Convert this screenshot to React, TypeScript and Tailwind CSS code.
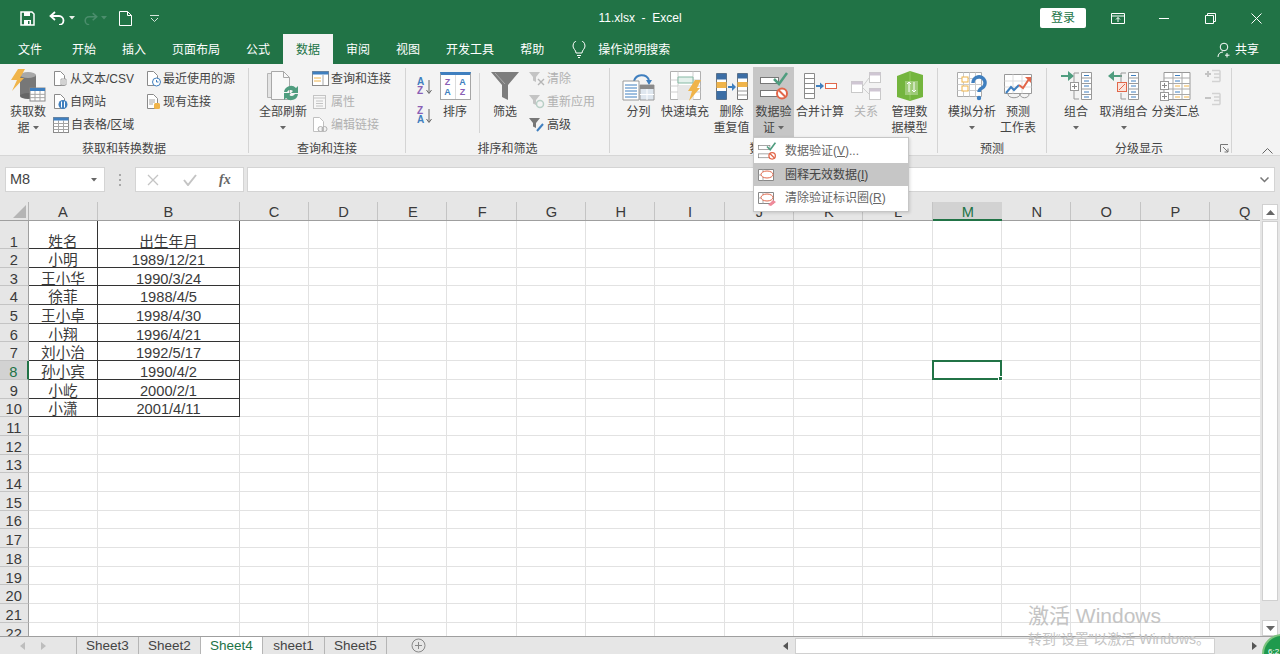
// App.tsx - Excel data tab with the data validation menu open
import type { ReactNode } from 'react';

const GRAY = '#8a8a8a';
const BLUE = '#3f7fbf';
const ORANGE = '#f0b44a';
const TEAL = '#4f9d7f';
const RED = '#e2674a';

const columns = ['A', 'B', 'C', 'D', 'E', 'F', 'G', 'H', 'I', 'J', 'K', 'L', 'M', 'N', 'O', 'P', 'Q'];

const people: [string, string][] = [
  ['姓名', '出生年月'],
  ['小明', '1989/12/21'],
  ['王小华', '1990/3/24'],
  ['徐菲', '1988/4/5'],
  ['王小卓', '1998/4/30'],
  ['小翔', '1996/4/21'],
  ['刘小治', '1992/5/17'],
  ['孙小宾', '1990/4/2'],
  ['小屹', '2000/2/1'],
  ['小潇', '2001/4/11'],
];

const tabs = ['开始', '插入', '页面布局', '公式', '数据', '审阅', '视图', '开发工具', '帮助'];
const sheets = ['Sheet3', 'Sheet2', 'Sheet4', 'sheet1', 'Sheet5'];

function Svg({ w, h, children }: { w: number; h: number; children: ReactNode }) {
  return (
    <svg width={w} height={h} viewBox={`0 0 ${w} ${h}`} fill="none" className="shrink-0">
      {children}
    </svg>
  );
}

function Caret({ color = '#666' }: { color?: string }) {
  return (
    <svg width="6" height="4" viewBox="0 0 6 4" className="shrink-0">
      <path d="M0 0h6L3 3.5z" fill={color} />
    </svg>
  );
}

function MiniTable({ x, y, w, h, head = BLUE, rows = 3, cols = 3 }: { x: number; y: number; w: number; h: number; head?: string; rows?: number; cols?: number }) {
  const lines = [];
  for (let i = 1; i < rows; i++) lines.push(<path key={`r${i}`} d={`M${x} ${y + 3 + ((h - 3) * i) / rows}h${w}`} stroke="#a5a5a5" />);
  for (let i = 1; i < cols; i++) lines.push(<path key={`c${i}`} d={`M${x + (w * i) / cols} ${y + 3}v${h - 3}`} stroke="#a5a5a5" />);
  return (
    <g>
      <rect x={x} y={y} width={w} height={h} fill="#fff" stroke="#8a8a8a" />
      {lines}
      <rect x={x} y={y} width={w} height="3" fill={head} />
    </g>
  );
}

function Doc({ x = 2, y = 1, w = 10, h = 14, stroke = GRAY }: { x?: number; y?: number; w?: number; h?: number; stroke?: string }) {
  return <path d={`M${x + 0.5} ${y + 0.5}h${w - 4}l4 4v${h - 4}h-${w}z`} fill="#fff" stroke={stroke} />;
}

function GetDataIcon() {
  return (
    <Svg w={36} h={34}>
      <path d="M10 6h16v21H10z" fill="#777" />
      <ellipse cx="18" cy="6" rx="8" ry="3" fill="#a8a8a8" />
      <ellipse cx="18" cy="27" rx="8" ry="3" fill="#666" />
      <path d="M8 0h7l-5 9h4L2 22l5-11H1z" fill={ORANGE} />
      <MiniTable x={20} y={19} w={15} h={13} />
    </Svg>
  );
}

function TextFileIcon() {
  return (
    <Svg w={15} h={17}>
      <Doc x={1} y={1} w={10} h={14} />
      <path d="M8 9h5v6H8z" fill="#fff" stroke="#a5a5a5" />
      <path d="M9 11h3M9 13h3" stroke="#a5a5a5" />
    </Svg>
  );
}

function WebIcon() {
  return (
    <Svg w={15} h={17}>
      <Doc x={1} y={1} w={10} h={14} />
      <circle cx="10" cy="11.5" r="4.5" fill={BLUE} />
      <path d="M8.5 8.5v6M11.5 8.5v6" stroke="#fff" />
    </Svg>
  );
}

function TableIcon() {
  return (
    <Svg w={16} h={17}>
      <MiniTable x={0.5} y={1.5} w={15} h={15} rows={4} cols={3} />
    </Svg>
  );
}

function RecentIcon() {
  return (
    <Svg w={15} h={17}>
      <Doc x={1} y={1} w={10} h={14} />
      <circle cx="10.5" cy="12" r="4" fill="#fff" stroke={BLUE} />
      <path d="M10.5 10v2h2" stroke={BLUE} />
    </Svg>
  );
}

function ExistingIcon() {
  return (
    <Svg w={15} h={17}>
      <Doc x={1} y={1} w={10} h={14} />
      <path d="M3 7h6M3 9h6M3 11h4" stroke="#a5a5a5" />
      <rect x="8" y="10" width="6" height="6" rx="1.5" fill={ORANGE} />
    </Svg>
  );
}

function RefreshIcon() {
  return (
    <Svg w={34} h={32}>
      <path d="M1.5 3.5h14v24h-14z" fill="#e4e4e4" stroke="#b5b5b5" />
      <path d="M5.5 1.5h12l6 6v22h-18z" fill="#f8f8f8" stroke="#a8a8a8" />
      <path d="M17.5 1.5v6h6" stroke="#a8a8a8" />
      <path d="M18 22a7 7 0 0 1 12-4l2-2v7h-7l2-2a4 4 0 0 0-6 1z" fill={TEAL} />
      <path d="M32 24a7 7 0 0 1-12 4l-2 2v-7h7l-2 2a4 4 0 0 0 6-1z" fill={TEAL} />
    </Svg>
  );
}

function QueriesIcon() {
  return (
    <Svg w={17} h={15}>
      <rect x="0.5" y="0.5" width="16" height="14" fill="#fff" stroke="#8a8a8a" />
      <rect x="0.5" y="0.5" width="16" height="3" fill={BLUE} />
      <path d="M11 4v10" stroke="#a5a5a5" />
      <path d="M2 7h7M2 10h7" stroke={ORANGE} />
    </Svg>
  );
}

function PropsIcon() {
  return (
    <Svg w={15} h={16}>
      <rect x="1.5" y="1.5" width="12" height="13" fill="#f7f7f7" stroke="#c4c4c4" />
      <path d="M1.5 4h12M4 7h7M4 9.5h7M4 12h7" stroke="#c4c4c4" />
    </Svg>
  );
}

function LinksIcon() {
  return (
    <Svg w={16} h={17}>
      <Doc x={1} y={1} w={10} h={14} stroke="#c0c0c0" />
      <circle cx="8.5" cy="13" r="2.5" fill="#f3f3f3" stroke="#b0b0b0" />
      <circle cx="12.5" cy="13" r="2.5" fill="none" stroke="#b0b0b0" />
    </Svg>
  );
}

function SortGlyph({ top, bottom }: { top: string; bottom: string }) {
  const color = (l: string) => (l === 'A' ? 'text-[#3f7fbf]' : 'text-[#8a5fb5]');
  return (
    <div className="relative flex h-[17px] w-[15px] flex-col text-[10px] font-bold leading-[8.500px]">
      <span className={color(top)}>{top}</span>
      <span className={color(bottom)}>{bottom}</span>
      <svg width="6" height="14" viewBox="0 0 6 14" className="absolute top-[2px] right-0">
        <path d="M3 0v13M0.500 10L3 13.500 5.500 10" stroke="#666" fill="none" />
      </svg>
    </div>
  );
}

function SortIcon() {
  return (
    <div className="relative h-[28px] w-[31px] border border-[#a5a5a5] border-t-[3px] border-t-[#3f7fbf] bg-white">
      <div className="grid h-full grid-cols-2 gap-x-px bg-[#dcdcdc] text-center text-[9px] font-bold leading-[10px]">
        <div className="flex flex-col bg-white pt-[2px]">
          <span className="text-[#8a5fb5]">Z</span>
          <span className="text-[#3f7fbf]">A</span>
        </div>
        <div className="flex flex-col bg-white pt-[2px]">
          <span className="text-[#3f7fbf]">A</span>
          <span className="text-[#8a5fb5]">Z</span>
        </div>
      </div>
    </div>
  );
}

function FunnelIcon() {
  return (
    <Svg w={30} h={30}>
      <path d="M1 1h28L18 14v15l-6-3V14z" fill="#7d7d7d" />
      <path d="M5 2l10 11" stroke="#aaa" />
    </Svg>
  );
}

function ClearIcon() {
  return (
    <Svg w={16} h={15}>
      <path d="M0 1h11L7 6v5L4 9.500V6z" fill="#c4c4c4" />
      <path d="M9 8l6 6M15 8l-6 6" stroke="#b5b5b5" strokeWidth="1.400" />
    </Svg>
  );
}

function ReapplyIcon() {
  return (
    <Svg w={16} h={15}>
      <path d="M0 1h11L7 6v5L4 9.500V6z" fill="#c4c4c4" />
      <circle cx="11" cy="10" r="3.500" stroke="#b8cfc6" strokeWidth="1.500" />
    </Svg>
  );
}

function AdvancedIcon() {
  return (
    <Svg w={16} h={16}>
      <path d="M0 1h11L7 6v5L4 9.500V6z" fill="#777" />
      <path d="M8 14l6-7" stroke={BLUE} strokeWidth="2" />
    </Svg>
  );
}

function SplitIcon() {
  return (
    <Svg w={33} h={29}>
      <path d="M12 9a8 8 0 0 1 15-1" stroke={BLUE} strokeWidth="2" />
      <path d="M24 8h6l-3 5z" fill={BLUE} />
      <path d="M1 9h16v19H1z" fill="#fff" stroke="#999" />
      <path d="M3 13h12M3 16h12M3 19h12M3 22h12M3 25h12" stroke={BLUE} />
      <path d="M18 13h14v15H18z" fill="#dfe7ef" stroke="#999" />
      <path d="M18 13h14v4H18z" fill="#8a8a8a" />
      <path d="M25 17v11M18 22.500h14" stroke="#fff" />
    </Svg>
  );
}

function FlashIcon() {
  return (
    <Svg w={31} h={30}>
      <path d="M0.500 0.500h30v28h-30z" fill="#fff" stroke="#b0b0b0" />
      <path d="M0.500 9h30M0.500 15h30M0.500 21h30M8 0.500v28M23 0.500v28" stroke="#cfcfcf" />
      <path d="M8 15h15v14H8z" fill="#e7e7e7" />
      <path d="M8 6h15v6H8z" fill="#e4f1ec" stroke="#86b9a4" />
      <path d="M25 9h6l-4 8h3L19 30l3-10h-4z" fill={ORANGE} />
    </Svg>
  );
}

function DedupeIcon() {
  return (
    <Svg w={32} h={27}>
      <path d="M0.500 0.500h10v26h-10z" fill="#fff" stroke="#777" />
      <path d="M0.500 0.500h10v6h-10z M0.500 18h10v8.500h-10z" fill="#3c6ea5" />
      <path d="M0.500 9h10v6h-10z" fill={ORANGE} />
      <path d="M12 14h6" stroke={BLUE} strokeWidth="2" />
      <path d="M16 10l4 4-4 4z" fill={BLUE} />
      <path d="M21.500 0.500h10v26h-10z" fill="#fff" stroke="#777" />
      <path d="M21.500 0.500h10v5h-10z" fill="#3c6ea5" />
      <path d="M21.500 9h10v5h-10z" fill={ORANGE} />
      <path d="M21.500 18h10M21.500 22h10" stroke="#999" />
    </Svg>
  );
}

function ValidateIcon({ size = 28 }: { size?: number }) {
  return (
    <svg width={size} height={size} viewBox="0 0 28 28" fill="none" className="shrink-0">
      <rect x="0.500" y="5.500" width="18" height="6" fill="#fff" stroke="#777" />
      <rect x="0.500" y="18.500" width="18" height="6" fill="#fff" stroke="#777" />
      <path d="M14 7l5 5 8-11" stroke={TEAL} strokeWidth="2.500" />
      <circle cx="22" cy="21.500" r="5" fill="#fff" stroke={RED} strokeWidth="2" />
      <path d="M18.500 18l7 7" stroke={RED} strokeWidth="2" />
    </svg>
  );
}

function ConsolidateIcon() {
  return (
    <Svg w={33} h={26}>
      <path d="M0.500 0.500h10v25h-10z" fill="#fff" stroke="#8a8a8a" />
      <path d="M0.500 5.500h10M0.500 10.500h10M0.500 15.500h10M0.500 20.500h10" stroke="#8a8a8a" />
      <path d="M12 13h6" stroke={BLUE} strokeWidth="2" />
      <path d="M16 9.500l4 3.500-4 3.500z" fill={BLUE} />
      <rect x="21.500" y="10.500" width="11" height="5" fill="#fff" stroke={RED} />
    </Svg>
  );
}

function RelationIcon() {
  return (
    <Svg w={30} h={28}>
      <rect x="0.500" y="9.500" width="11" height="11" fill="#fff" stroke="#c9c9c9" />
      <rect x="0.500" y="9.500" width="11" height="3" fill="#cfc6d3" />
      <rect x="18.500" y="0.500" width="11" height="10" fill="#fff" stroke="#c9c9c9" />
      <rect x="18.500" y="0.500" width="11" height="3" fill="#cfc6d3" />
      <rect x="18.500" y="16.500" width="11" height="11" fill="#fff" stroke="#c9c9c9" />
      <rect x="18.500" y="16.500" width="11" height="3" fill="#cfc6d3" />
      <path d="M12 14l6-8M12 16l6 6" stroke="#cfcfcf" />
    </Svg>
  );
}

function ModelIcon() {
  return (
    <Svg w={29} h={30}>
      <path d="M2 5l13-5 13 4v22l-13 4-13-4z" fill="#74b53e" />
      <path d="M15 0v30" stroke="#8fca5c" />
      <rect x="10" y="10" width="13" height="14" fill="#fff" opacity="0.300" />
      <path d="M14 11v10M12 13l2-2 2 2M19 21V11M17 19l2 2 2-2" stroke="#fff" />
    </Svg>
  );
}

function WhatIfIcon() {
  return (
    <Svg w={30} h={29}>
      <path d="M0.500 0.500h24v24h-24z" fill="#fff" stroke="#aaa" />
      <path d="M0.500 6.500h24M0.500 12.500h24M0.500 18.500h24M6.500 0.500v24M12.500 0.500v24M18.500 0.500v24" stroke="#ccc" />
      <rect x="5" y="5" width="6" height="5" fill="#fff" stroke={ORANGE} />
      <rect x="5" y="14" width="6" height="5" fill="#fff" stroke={ORANGE} />
      <path d="M16 11a6 6 0 1 1 9 5c-2 1-3 2-3 4" stroke={BLUE} strokeWidth="3.500" />
      <circle cx="22" cy="26" r="2.200" fill={BLUE} />
    </Svg>
  );
}

function ForecastIcon() {
  return (
    <Svg w={29} h={25}>
      <path d="M0.500 0.500h27v19h-27z" fill="#fff" stroke="#999" />
      <path d="M0.500 7h27M0.500 13h27M9 0.500v19M18 0.500v19" stroke="#ddd" />
      <path d="M2 19l5-6 3 3 5-5" stroke={BLUE} strokeWidth="2" />
      <path d="M15 11l4 3 6-9" stroke={RED} strokeWidth="2" />
      <path d="M21 3h6v6z" fill={RED} />
      <path d="M4 20c0 5 12 5 12 0M16 20c0 5 9 5 9 0" stroke="#999" />
    </Svg>
  );
}

function OutlineRows({ x }: { x: number }) {
  return (
    <g>
      <path d={`M${x}.500 1.500h10v27h-10z`} fill="#fff" stroke="#999" />
      <path d={`M${x}.500 7h10M${x}.500 12.500h10M${x}.500 18h10M${x}.500 23.500h10`} stroke="#999" />
      <path d={`M${x + 3} 4.500h5M${x + 3} 10h5M${x + 3} 15h5M${x + 3} 21h5M${x + 3} 26h5`} stroke={BLUE} />
    </g>
  );
}

function GroupIcon() {
  return (
    <Svg w={31} h={30}>
      <path d="M0 5h9" stroke={TEAL} strokeWidth="2" />
      <path d="M7 0l6 5-6 5z" fill={TEAL} />
      <path d="M13 2h5M13 28h5M13 2v9M13 19v9" stroke="#999" />
      <rect x="9.500" y="11.500" width="8" height="8" fill="#fff" stroke="#999" />
      <path d="M11 15.500h5M13.500 13v5" stroke="#888" />
      <OutlineRows x={20} />
    </Svg>
  );
}

function UngroupIcon() {
  return (
    <Svg w={31} h={30}>
      <path d="M5 5h9" stroke={TEAL} strokeWidth="2" />
      <path d="M6 0L0 5l6 5z" fill={TEAL} />
      <path d="M13 2h5M13 28h5M13 2v9M13 22v6" stroke="#999" />
      <rect x="9.500" y="11.500" width="9" height="9" fill="#fbe4dc" stroke={RED} />
      <path d="M11 19l6-6" stroke={RED} />
      <OutlineRows x={20} />
    </Svg>
  );
}

function SubtotalIcon() {
  return (
    <Svg w={31} h={30}>
      <path d="M4 1.500h26v27H4z" fill="#fff" stroke="#999" />
      <path d="M13 1.500v27M22 1.500v27M4 7h26M4 12.500h26M4 18h26M4 23.500h26" stroke="#aaa" />
      <path d="M15 4.500h5M15 10h5M15 21h5" stroke={BLUE} />
      <path d="M15 15h5M24 15h5M15 26h5M24 26h5" stroke={ORANGE} />
      <rect x="0.500" y="10.500" width="8" height="8" fill="#fff" stroke="#999" />
      <rect x="0.500" y="21.500" width="8" height="8" fill="#fff" stroke="#999" />
      <path d="M2 14.500h5M4.500 12v5M2 25.500h5M4.500 23v5" stroke="#888" />
    </Svg>
  );
}

function ShowDetailIcon({ minus }: { minus?: boolean }) {
  return (
    <Svg w={16} h={15}>
      <path d="M7 1.500h8M9 5h6M9 8.500h6M7 12.500h8M15 1.500v11" stroke="#d2d2d2" strokeWidth="1.500" />
      <path d={minus ? 'M0 6h6' : 'M0 5h6M3 2v6'} stroke="#c4c4c4" strokeWidth="2" />
    </Svg>
  );
}

function CircleMenuIcon({ eraser }: { eraser?: boolean }) {
  return (
    <Svg w={18} h={16}>
      <path d="M0.500 2.500h15v11h-15z" fill="#fff" stroke="#888" />
      <path d="M0.500 8h15M5 2.500v11" stroke="#aaa" />
      <ellipse cx="9" cy="7.500" rx="6" ry="3.500" fill="#fff" stroke={RED} />
      {eraser && <path d="M10 15l5-5 3 2-5 4z" fill="#ef8a9a" />}
    </Svg>
  );
}

function LargeButton({ icon, lines, caret, dim, active, width }: { icon: ReactNode; lines: string[]; caret?: boolean; dim?: boolean; active?: boolean; width: string }) {
  return (
    <div className={`flex h-[70px] shrink-0 flex-col items-center ${width} ${active ? 'bg-[#c6c6c6]' : ''}`}>
      <div className="flex h-[37px] items-center justify-center pt-[1px]">{icon}</div>
      {lines.map((line, i) => (
        <div key={i} className={`flex h-[16px] items-center gap-[3px] whitespace-nowrap leading-[16px] ${dim ? 'text-[#b1b1b1]' : 'text-[#444]'}`}>
          {line}
          {caret && lines.length > 1 && i === lines.length - 1 && <Caret />}
        </div>
      ))}
      {caret && lines.length === 1 && (
        <div className="flex h-[16px] items-center">
          <Caret />
        </div>
      )}
    </div>
  );
}

function SmallButton({ icon, label, dim, gap = 'gap-[2px]' }: { icon: ReactNode; label: string; dim?: boolean; gap?: string }) {
  return (
    <div className={`flex h-[23px] items-center whitespace-nowrap ${gap} ${dim ? 'text-[#b1b1b1]' : 'text-[#444]'}`}>
      {icon}
      {label}
    </div>
  );
}

function Group({ label, width, children }: { label: string; width: string; children: ReactNode }) {
  return (
    <div className={`flex shrink-0 flex-col ${width}`}>
      <div className="flex h-[70px]">{children}</div>
      <div className="mt-[3px] flex h-[19px] items-center justify-center leading-[19px] text-[#444]">{label}</div>
    </div>
  );
}

function Sep() {
  return <div className="my-[1px] h-[85px] w-px shrink-0 bg-[#d4d4d4]" />;
}

function TitleBar() {
  return (
    <div className="flex h-[36px] shrink-0 items-center bg-[#217346] text-white">
      <div className="ml-[20px] flex w-[150px] items-center">
        <svg width="15" height="15" viewBox="0 0 15 15">
          <path d="M1 1h11l2 2v11H1z" fill="none" stroke="#fff" strokeWidth="1.500" />
          <path d="M4 1h6v4H4zM4 9h7v5H4z" fill="#fff" />
          <path d="M8 10h1.500v3H8z" fill="#217346" />
        </svg>
        <svg width="17" height="14" viewBox="0 0 17 14" fill="none" className="ml-[14px]">
          <path d="M6 1L1.500 5 6 9M2 5h8a4.500 4.500 0 0 1 0 9" stroke="#fff" strokeWidth="1.800" />
        </svg>
        <div className="ml-[3px]">
          <Caret color="#e8efe9" />
        </div>
        <svg width="15" height="13" viewBox="0 0 17 14" fill="none" className="ml-[8px]">
          <path d="M11 1l4.500 4L11 9M15 5H7a4.500 4.500 0 0 0 0 9" stroke="#4b8d6c" strokeWidth="1.800" />
        </svg>
        <div className="ml-[3px]">
          <Caret color="#4b8d6c" />
        </div>
        <svg width="13" height="15" viewBox="0 0 13 15" fill="none" className="ml-[12px]">
          <path d="M0.500 0.500h8l4 4v10h-12zM8.500 0.500v4h4" stroke="#fff" />
        </svg>
        <svg width="9" height="7" viewBox="0 0 9 7" fill="none" className="ml-[18px]">
          <path d="M0 0.500h9M1 3l3.500 3.500L8 3" stroke="#d5e4da" />
        </svg>
      </div>
      <div className="flex-1 pl-[70px] text-center text-[12px]">11.xlsx&nbsp; -&nbsp; Excel</div>
      <div className="flex h-[20px] w-[46px] items-center justify-center rounded-[2px] bg-white text-[12px] text-[#217346]">登录</div>
      <svg width="14" height="11" viewBox="0 0 14 11" fill="none" className="ml-[25px]">
        <path d="M0.500 0.500h13v10h-13zM0.500 3h13M7 9V4.500M5 6.500l2-2 2 2" stroke="#fff" />
      </svg>
      <svg width="10" height="1" viewBox="0 0 10 1" className="ml-[34px]">
        <path d="M0 0.500h10" stroke="#fff" />
      </svg>
      <svg width="11" height="11" viewBox="0 0 11 11" fill="none" className="ml-[36px]">
        <path d="M0.500 2.500h8v8h-8zM2.500 2.500v-2h8v8h-2" stroke="#fff" />
      </svg>
      <svg width="11" height="11" viewBox="0 0 11 11" fill="none" className="mr-[18px] ml-[35px]">
        <path d="M0.500 0.500l10 10M10.500 0.500l-10 10" stroke="#fff" />
      </svg>
    </div>
  );
}

function TabRow() {
  return (
    <div className="flex h-[28px] shrink-0 items-end bg-[#217346] text-[12px] text-white">
      <div className="ml-[5px] flex h-[30px] w-[50px] items-center justify-center pt-[1px]">文件</div>
      {tabs.map((tab, i) => (
        <div
          key={tab}
          className={`flex h-[30px] items-center px-[13px] pt-[1px] ${i === 0 ? 'ml-[4px]' : ''} ${tab === '数据' ? 'bg-[#f3f3f3] text-[#217346]' : ''}`}
        >
          {tab}
        </div>
      ))}
      <div className="ml-[15px] flex h-[30px] items-center gap-[12px] pt-[1px]">
        <svg width="14" height="17" viewBox="0 0 14 17" fill="none">
          <path d="M4 12c0-3-3-4-3-7a6 6 0 0 1 12 0c0 3-3 4-3 7zM5 14.500h4M6 16.500h2" stroke="#fff" />
        </svg>
        操作说明搜索
      </div>
      <div className="mr-[21px] ml-auto flex h-[30px] items-center gap-[3px] pt-[1px]">
        <svg width="15" height="16" viewBox="0 0 15 16" fill="none">
          <circle cx="7" cy="5" r="3.800" stroke="#fff" />
          <path d="M1 15c0-3 2-5 5-5M10 11v4.500M8 13.200h4.500" stroke="#fff" />
        </svg>
        共享
      </div>
    </div>
  );
}

function Ribbon() {
  return (
    <div className="flex h-[92px] shrink-0 border-b border-[#d6d6d6] bg-[#f3f3f3] pt-[3px] text-[12px]">
      <Group label="获取和转换数据" width="w-[248px]">
        <div className="ml-[3px]">
          <LargeButton icon={<GetDataIcon />} lines={['获取数', '据']} caret width="w-[50px]" />
        </div>
        <div className="w-[93px]">
          <SmallButton icon={<TextFileIcon />} label="从文本/CSV" />
          <SmallButton icon={<WebIcon />} label="自网站" />
          <SmallButton icon={<TableIcon />} label="自表格/区域" />
        </div>
        <div>
          <SmallButton icon={<RecentIcon />} label="最近使用的源" />
          <SmallButton icon={<ExistingIcon />} label="现有连接" />
        </div>
      </Group>
      <Sep />
      <Group label="查询和连接" width="w-[156px]">
        <div className="ml-[5px]">
          <LargeButton icon={<RefreshIcon />} lines={['全部刷新']} caret width="w-[58px]" />
        </div>
        <div>
          <SmallButton icon={<QueriesIcon />} label="查询和连接" />
          <SmallButton icon={<PropsIcon />} label="属性" dim gap="gap-[4px]" />
          <SmallButton icon={<LinksIcon />} label="编辑链接" dim gap="gap-[3px]" />
        </div>
      </Group>
      <Sep />
      <Group label="排序和筛选" width="w-[203px]">
        <div className="ml-[11px] flex h-[70px] w-[22px] flex-col gap-[12px] pt-[11px]">
          <SortGlyph top="A" bottom="Z" />
          <SortGlyph top="Z" bottom="A" />
        </div>
        <LargeButton icon={<SortIcon />} lines={['排序']} width="w-[32px]" />
        <div className="mx-[8px] mt-[6px] h-[60px] w-px bg-[#d4d4d4]" />
        <LargeButton icon={<FunnelIcon />} lines={['筛选']} width="w-[34px]" />
        <div className="pl-[7px]">
          <SmallButton icon={<ClearIcon />} label="清除" dim />
          <SmallButton icon={<ReapplyIcon />} label="重新应用" dim />
          <SmallButton icon={<AdvancedIcon />} label="高级" />
        </div>
      </Group>
      <Sep />
      <Group label="数据工具" width="w-[327px]">
        <div className="ml-[7px] flex">
          <LargeButton icon={<SplitIcon />} lines={['分列']} width="w-[43px]" />
          <LargeButton icon={<FlashIcon />} lines={['快速填充']} width="w-[50px]" />
          <LargeButton icon={<DedupeIcon />} lines={['删除', '重复值']} width="w-[43px]" />
          <LargeButton icon={<ValidateIcon />} lines={['数据验', '证']} caret active width="w-[41px]" />
          <LargeButton icon={<ConsolidateIcon />} lines={['合并计算']} width="w-[52px]" />
          <LargeButton icon={<RelationIcon />} lines={['关系']} dim width="w-[40px]" />
          <LargeButton icon={<ModelIcon />} lines={['管理数', '据模型']} width="w-[47px]" />
        </div>
      </Group>
      <Sep />
      <Group label="预测" width="w-[108px]">
        <div className="ml-[8px] flex">
          <LargeButton icon={<WhatIfIcon />} lines={['模拟分析']} caret width="w-[52px]" />
          <LargeButton icon={<ForecastIcon />} lines={['预测', '工作表']} width="w-[40px]" />
        </div>
      </Group>
      <Sep />
      <Group label="分级显示" width="w-[184px]">
        <div className="ml-[9px] flex">
          <LargeButton icon={<GroupIcon />} lines={['组合']} caret width="w-[40px]" />
          <LargeButton icon={<UngroupIcon />} lines={['取消组合']} caret width="w-[55px]" />
          <LargeButton icon={<SubtotalIcon />} lines={['分类汇总']} width="w-[49px]" />
          <div className="ml-[5px] flex flex-col gap-[8px] pt-[2px]">
            <ShowDetailIcon />
            <ShowDetailIcon minus />
          </div>
        </div>
      </Group>
      <Sep />
    </div>
  );
}

function FormulaBar() {
  return (
    <div className="flex h-[46px] shrink-0 items-start bg-[#e6e6e6] pt-[11px] text-[14.500px] text-[#444]">
      <div className="ml-[5px] flex h-[25px] w-[100px] items-center justify-between border border-[#d4d4d4] bg-white pr-[7px] pl-[4px]">
        M8
        <Caret />
      </div>
      <div className="mx-[14px] flex h-[25px] w-[2px] flex-col justify-center gap-[3px]">
        <div className="h-[2px] w-[2px] bg-[#a8a8a8]" />
        <div className="h-[2px] w-[2px] bg-[#a8a8a8]" />
        <div className="h-[2px] w-[2px] bg-[#a8a8a8]" />
      </div>
      <div className="flex h-[25px] w-[109px] items-center border border-[#d4d4d4] bg-white">
        <svg width="12" height="12" viewBox="0 0 12 12" fill="none" className="ml-[11px]">
          <path d="M1 1l10 10M11 1L1 11" stroke="#c4c4c4" strokeWidth="1.300" />
        </svg>
        <svg width="14" height="12" viewBox="0 0 14 12" fill="none" className="ml-[24px]">
          <path d="M1 6l4 5 8-10" stroke="#c4c4c4" strokeWidth="2" />
        </svg>
        <span className="ml-[22px] font-['Liberation_Serif',serif] text-[14px] font-bold italic text-[#666]">fx</span>
      </div>
      <div className="ml-[3px] flex h-[25px] flex-1 items-center justify-end border border-[#d4d4d4] bg-white pr-[5px]">
        <svg width="9" height="6" viewBox="0 0 9 6" fill="none">
          <path d="M0.500 0.500L4.500 4.500 8.500 0.500" stroke="#777" strokeWidth="1.500" />
        </svg>
      </div>
      <div className="w-[5px]" />
    </div>
  );
}

function HeaderRow() {
  return (
    <div className="grid h-[18.500px] shrink-0 grid-cols-[28.500px_69px_142px_repeat(15,69.330px)] grid-rows-[minmax(0,1fr)] border-b border-[#9f9f9f] bg-[#e6e6e6] leading-[20px]">
      <div className="flex items-end justify-end border-r border-[#b5b5b5] pr-[2px] pb-[2px]">
        <svg width="13" height="13" viewBox="0 0 13 13">
          <path d="M13 0v13H0z" fill="#b5b5b5" />
        </svg>
      </div>
      {columns.map((c) => (
        <div
          key={c}
          className={`pl-[1px] text-center ${c === 'M' ? 'h-[19px] border-b-2 border-[#217346] bg-[#d2d2d2] text-[#217346]' : 'border-r border-[#c4c4c4]'}`}
        >
          {c}
        </div>
      ))}
    </div>
  );
}

function SheetRow({ index }: { index: number }) {
  const person = people[index];
  const boxed = index < people.length;
  const selectedRow = index === 7;
  const rowAlign = index === 0 ? 'items-end' : 'items-center';
  const height = index === 0 ? 'h-[28.500px]' : 'h-[18.700px]';
  const nudge = index === 0 ? 'translate-y-[3px]' : 'translate-y-[2px]';
  return (
    <div className={`grid shrink-0 grid-cols-[28.500px_69px_142px_repeat(15,69.330px)] grid-rows-[minmax(0,1fr)] leading-[18px] ${height}`}>
      <div
        className={`flex justify-center ${rowAlign} border-b border-[#c4c4c4] ${selectedRow ? 'border-r-2 border-r-[#217346] bg-[#d2d2d2] text-[#217346]' : 'border-r border-r-[#9f9f9f] bg-[#e6e6e6]'}`}
      >
        <span className={nudge}>{index + 1}</span>
      </div>
      {columns.map((c, i) => {
        const text = person && i < 2 ? person[i] : '';
        const dark = boxed && i < 2;
        return (
          <div
            key={c}
            className={`relative flex justify-center whitespace-nowrap border-r border-b pl-[1px] ${rowAlign} ${dark ? 'border-[#333]' : 'border-[#e2e2e2]'}`}
          >
            {text && <span className={nudge}>{text}</span>}
            {selectedRow && c === 'M' && (
              <div className="absolute -top-px -left-px z-10 h-[20px] w-[70px] border-2 border-[#217346]">
                <div className="absolute -right-[3px] -bottom-[3px] h-[5px] w-[5px] border border-white bg-[#217346]" />
              </div>
            )}
          </div>
        );
      })}
    </div>
  );
}

function ScrollButton({ direction }: { direction: 'up' | 'down' }) {
  return (
    <div className="flex h-[16px] w-[16px] items-center justify-center border border-[#d0d0d0] bg-white">
      <svg width="9" height="5" viewBox="0 0 9 5">
        <path d={direction === 'up' ? 'M0 5h9L4.500 0z' : 'M0 0h9L4.500 5z'} fill="#666" />
      </svg>
    </div>
  );
}

function SheetArea() {
  const rows = Array.from({ length: 22 }, (_, i) => i);
  return (
    <div className="flex min-h-0 flex-1">
      <div className="flex w-[1260px] shrink-0 flex-col overflow-hidden text-[14.670px] text-[#3a3a3a]">
        <HeaderRow />
        {rows.map((i) => (
          <SheetRow key={i} index={i} />
        ))}
      </div>
      <div className="flex flex-1 flex-col items-center bg-[#e6e6e6] pt-[2px]">
        <ScrollButton direction="up" />
        <div className="mt-[1px] h-[380px] w-[16px] border border-[#d0d0d0] bg-white" />
        <div className="mt-auto">
          <ScrollButton direction="down" />
        </div>
      </div>
    </div>
  );
}

function SheetTabs() {
  return (
    <div className="flex h-[18px] shrink-0 items-center border-t border-[#9f9f9f] bg-[#e6e6e6] text-[13.500px] leading-[17px] text-[#444]">
      <div className="flex w-[77px] items-center gap-[16px] pl-[20px]">
        <svg width="5" height="8" viewBox="0 0 5 8">
          <path d="M5 0v8L0 4z" fill="#bdbdbd" />
        </svg>
        <svg width="5" height="8" viewBox="0 0 5 8">
          <path d="M0 0v8l5-4z" fill="#bdbdbd" />
        </svg>
      </div>
      {sheets.map((s) => (
        <div
          key={s}
          className={`h-[18px] w-[63px] border-r border-l border-[#b5b5b5] text-center -ml-px first:ml-0 ${s === 'Sheet4' ? 'bg-white text-[#217346]' : ''}`}
        >
          {s}
        </div>
      ))}
      <svg width="15" height="15" viewBox="0 0 15 15" fill="none" className="ml-[24px]">
        <circle cx="7.500" cy="7.500" r="6.500" stroke="#888" />
        <path d="M4 7.500h7M7.500 4v7" stroke="#888" />
      </svg>
      <div className="ml-auto flex h-[17px] w-[500px] items-center">
        <svg width="5" height="8" viewBox="0 0 5 8" className="mr-[7px] ml-[3px]">
          <path d="M5 0v8L0 4z" fill="#555" />
        </svg>
        <div className="h-[16px] w-[420px] border border-[#d0d0d0] bg-white" />
        <svg width="5" height="8" viewBox="0 0 5 8" className="ml-[37px]">
          <path d="M0 0v8l5-4z" fill="#555" />
        </svg>
      </div>
    </div>
  );
}

function ValidationMenu() {
  return (
    <div className="absolute top-[137px] left-[753px] z-20 flex h-[75px] w-[156px] flex-col border border-[#c6c6c6] bg-white py-[1px] text-[12px] text-[#666] shadow-[1px_1px_3px_rgba(0,0,0,0.150)]">
      <div className="flex h-[24px] items-center gap-[9px] pl-[4px]">
        <ValidateIcon size={18} />
        <span>
          数据验证(<span className="underline">V</span>)...
        </span>
      </div>
      <div className="flex h-[24px] items-center gap-[9px] bg-[#c6c6c6] pl-[4px] text-[#444]">
        <CircleMenuIcon />
        <span>
          圈释无效数据(<span className="underline">I</span>)
        </span>
      </div>
      <div className="flex h-[24px] items-center gap-[9px] pl-[4px]">
        <CircleMenuIcon eraser />
        <span>
          清除验证标识圈(<span className="underline">R</span>)
        </span>
      </div>
    </div>
  );
}

export default function App() {
  return (
    <div className="relative flex h-[654px] w-[1280px] flex-col overflow-hidden bg-white font-['Liberation_Sans','Noto_Sans_CJK_SC',sans-serif]">
      <TitleBar />
      <TabRow />
      <Ribbon />
      <FormulaBar />
      <SheetArea />
      <SheetTabs />
      <ValidationMenu />

      {/* ribbon corner controls */}
      <svg width="9" height="9" viewBox="0 0 9 9" fill="none" className="absolute top-[144px] left-[1220px]">
        <path d="M0.500 8V0.500H8M3 3l5 5M8 4.500V8H4.500" stroke="#777" />
      </svg>
      <svg width="11" height="6" viewBox="0 0 11 6" fill="none" className="absolute top-[148px] left-[1262px]">
        <path d="M0.500 5.500l5-5 5 5" stroke="#666" />
      </svg>

      {/* activation watermark */}
      <div className="pointer-events-none absolute top-[603px] left-[1028px] z-30 whitespace-nowrap text-[#c4c4c4]">
        <div className="text-[21px] leading-[26px]">激活 Windows</div>
        <div className="text-[14px] leading-[20px]">转到“设置”以激活 Windows。</div>
      </div>

      {/* floating badge in the corner */}
      <div className="absolute top-[634px] left-[1262px] z-30 flex h-[40px] w-[40px] justify-start rounded-full border-2 border-[#7cc47f] bg-[#1f9a4d] pt-[12px] pl-[4px] text-[8px] leading-[8px] text-white">
        6:2
      </div>
    </div>
  );
}
